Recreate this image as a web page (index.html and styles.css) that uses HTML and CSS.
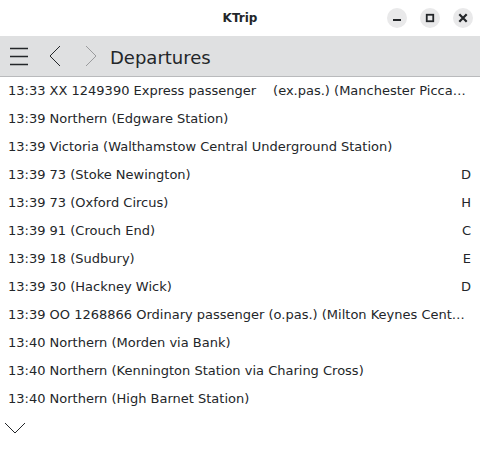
FILE: index.html
```html
<!DOCTYPE html>
<html>
<head>
<meta charset="utf-8">
<link rel="stylesheet" href="styles.css">
</head>
<body>
<div class="window">
  <header class="titlebar">
    <div class="title">KTrip</div>
    <div class="wbuttons">
      <span class="wbtn"><svg width="20" height="20" viewBox="0 0 20 20"><rect x="6" y="11" width="8" height="2" fill="#232629"/></svg></span>
      <span class="wbtn"><svg width="20" height="20" viewBox="0 0 20 20"><rect x="6.75" y="6.75" width="6.5" height="6.5" fill="none" stroke="#232629" stroke-width="1.8"/></svg></span>
      <span class="wbtn"><svg width="20" height="20" viewBox="0 0 20 20"><path d="M6.3 6.3 L13.7 13.7 M13.7 6.3 L6.3 13.7" stroke="#232629" stroke-width="2.2"/></svg></span>
    </div>
  </header>
  <nav class="toolbar">
    <span class="tbtn menu"><svg width="20" height="20" viewBox="0 0 20 20"><path d="M1 2.5H19M1 10.5H19M1 18.5H19" stroke="#232629" stroke-width="1.3"/></svg></span>
    <span class="tbtn back"><svg width="14" height="22" viewBox="0 0 14 22"><path d="M12 1 L2 11 L12 21" fill="none" stroke="#232629" stroke-width="1"/></svg></span>
    <span class="tbtn fwd"><svg width="14" height="22" viewBox="0 0 14 22"><path d="M2 1 L12 11 L2 21" fill="none" stroke="#9a9b9d" stroke-width="1"/></svg></span>
    <span class="heading">Departures</span>
  </nav>
  <ul class="list">
    <li><span class="txt">13:33 XX 1249390 Express passenger<span class="gap"></span>(ex.pas.) (Manchester Picca…</span></li>
    <li><span class="txt">13:39 Northern (Edgware Station)</span></li>
    <li><span class="txt">13:39 Victoria (Walthamstow Central Underground Station)</span></li>
    <li><span class="txt">13:39 73 (Stoke Newington)</span><span class="plat">D</span></li>
    <li><span class="txt">13:39 73 (Oxford Circus)</span><span class="plat">H</span></li>
    <li><span class="txt">13:39 91 (Crouch End)</span><span class="plat">C</span></li>
    <li><span class="txt">13:39 18 (Sudbury)</span><span class="plat">E</span></li>
    <li><span class="txt">13:39 30 (Hackney Wick)</span><span class="plat">D</span></li>
    <li><span class="txt">13:39 OO 1268866 Ordinary passenger (o.pas.) (Milton Keynes Cent…</span></li>
    <li><span class="txt">13:40 Northern (Morden via Bank)</span></li>
    <li><span class="txt">13:40 Northern (Kennington Station via Charing Cross)</span></li>
    <li><span class="txt">13:40 Northern (High Barnet Station)</span></li>
  </ul>
  <div class="more"><svg width="22" height="12" viewBox="0 0 22 12"><path d="M1 1 L11 11 L21 1" fill="none" stroke="#232629" stroke-width="1"/></svg></div>
</div>
</body>
</html>
```
FILE: styles.css
```css
html, body {
  margin: 0;
  padding: 0;
  background: #ffffff;
}
body {
  font-family: "DejaVu Sans", sans-serif;
  color: #232629;
  width: 480px;
  height: 476px;
  overflow: hidden;
}
.titlebar {
  height: 36px;
  display: flex;
  align-items: center;
  justify-content: center;
  position: relative;
  background: #ffffff;
}
.title {
  font-weight: bold;
  font-size: 12px;
  color: #232629;
}
.wbuttons {
  position: absolute;
  right: 7px;
  top: 8px;
  display: flex;
  gap: 13px;
}
.wbtn {
  width: 20px;
  height: 20px;
  border-radius: 50%;
  background: #e9e9ea;
  display: flex;
}
.toolbar {
  height: 40px;
  background: #dfe0e1;
  border-bottom: 1px solid #b9babc;
  display: flex;
  align-items: center;
  padding-left: 9px;
}
.tbtn {
  display: flex;
}
.menu { margin-right: 19px; }
.back { margin-right: 22px; }
.fwd { margin-right: 12px; }
.heading {
  font-size: 18px;
  color: #232629;
  padding-top: 2px;
}
.list {
  list-style: none;
  margin: 0;
  padding: 0;
}
.list li {
  box-sizing: border-box;
  height: 28px;
  display: flex;
  align-items: center;
  justify-content: space-between;
  padding: 0 9px 2px 8px;
  font-size: 13px;
  white-space: nowrap;
}
.gap {
  display: inline-block;
  width: 17px;
}
.more {
  padding: 9px 0 0 4px;
  display: flex;
}
```
